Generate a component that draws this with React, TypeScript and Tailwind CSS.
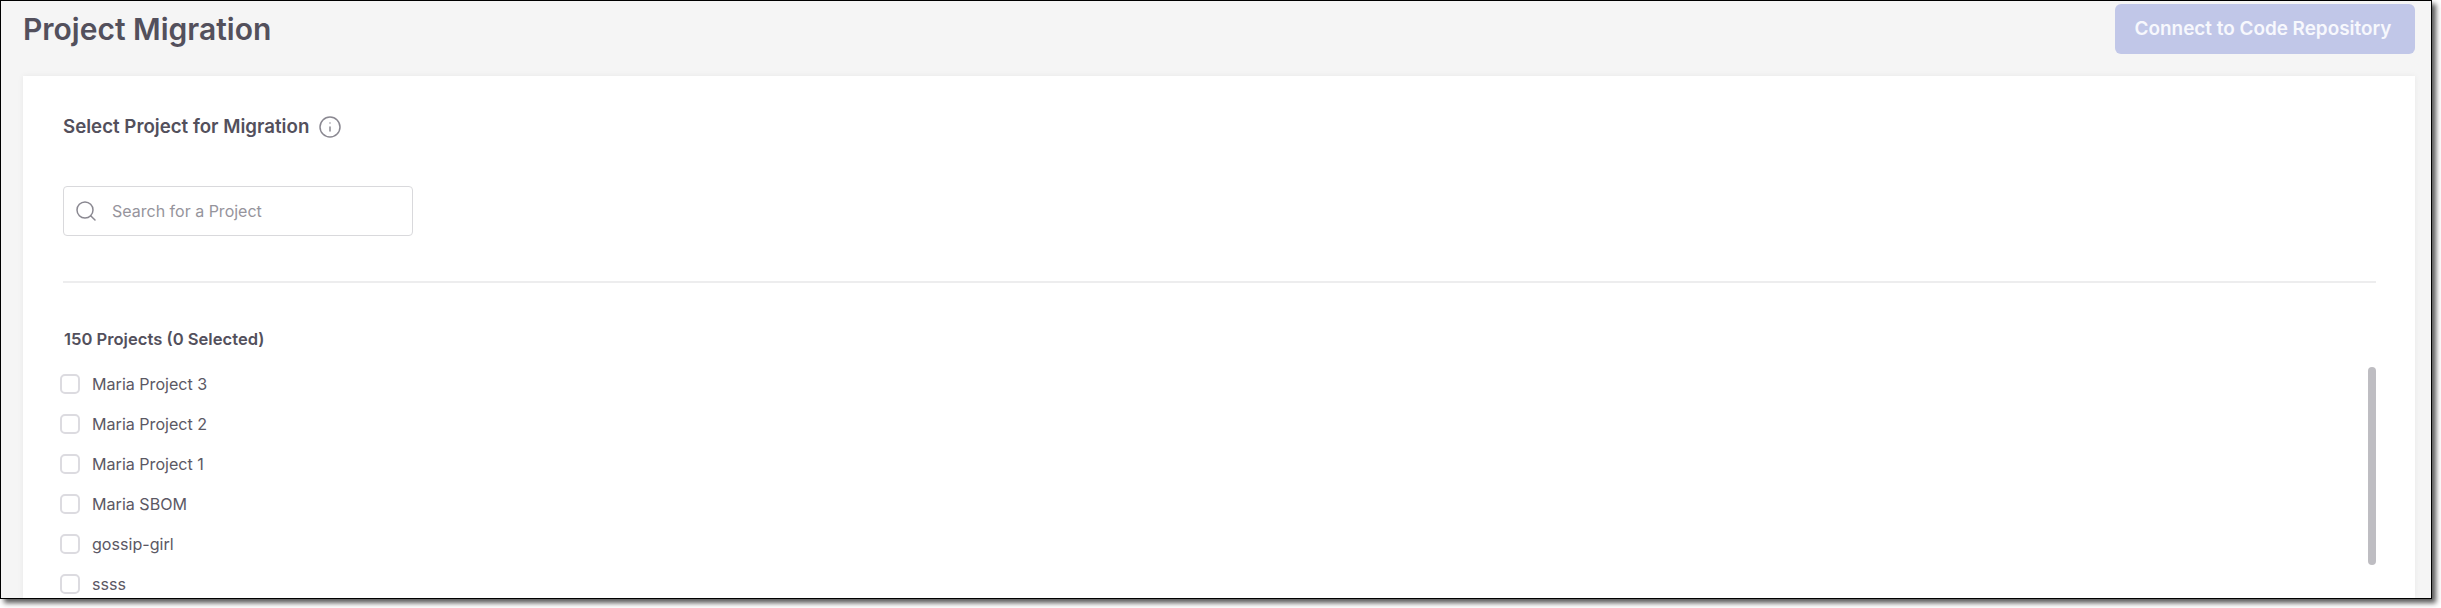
import React from 'react';
import { Info, Search } from 'lucide-react';

const projects = ['Maria Project 3', 'Maria Project 2', 'Maria Project 1', 'Maria SBOM', 'gossip-girl', 'ssss'];

const App: React.FC = () => {
  return (
    <div className="h-[608px] w-[2441px] overflow-hidden bg-white font-['Inter',sans-serif]">
      <div className="flex h-[599px] w-[2432px] flex-col overflow-hidden border border-black bg-[#f5f5f5] shadow-[4px_4px_5px_rgba(0,0,0,0.65)]">
        {/* Header */}
        <div className="flex h-[75px] shrink-0 items-start justify-between pl-[22px] pr-4 pt-[3px]">
          <h1 className="mt-[1px] text-[30px] font-semibold leading-[48px] text-[#53505c]">Project Migration</h1>
          <button className="h-[50px] w-[300px] rounded-md bg-[#c1c7e8] pr-1 text-[18.9px] font-semibold text-[#f7f8fd]">
            Connect to Code Repository
          </button>
        </div>

        {/* Card */}
        <div className="relative ml-[22px] mr-4 flex-1 overflow-hidden bg-white pl-10 pr-[39px] shadow-[0_0_6px_rgba(0,0,0,0.06)]">
          <div className="mt-[36px] flex h-[30px] items-center">
            <h2 className="pt-[1px] text-[18.7px] font-semibold text-[#53505c]">Select Project for Migration</h2>
            <Info size={24} strokeWidth={1.5} className="ml-[9px] text-[#8a8891]" />
          </div>

          <div className="mt-[44px] flex h-[50px] w-[350px] items-center rounded-[4px] border border-[#d9d9dc] bg-white pl-[10px]">
            <Search size={24} strokeWidth={1.5} className="text-[#8a8891]" />
            <span className="ml-[14px] text-[16px] text-[#96949c]">Search for a Project</span>
          </div>

          <div className="mt-[45px] h-[2px] bg-[#ededee]" />

          <div className="ml-[1px] mt-[44px] text-[16.6px] font-semibold leading-6 text-[#53505c]">150 Projects (0 Selected)</div>

          <ul className="-ml-[3px] mt-[13px]">
            {projects.map(p => (
              <li key={p} className="flex h-10 items-center gap-3">
                <span className="h-5 w-5 rounded-[5px] border-2 border-[#dcdbe0] bg-white" />
                <span className="text-[16.1px] text-[#5b5864]">{p}</span>
              </li>
            ))}
          </ul>

          {/* Scrollbar thumb */}
          <div className="absolute right-[39px] top-[291px] h-[198px] w-2 rounded-full bg-[#bebdc2]" />
        </div>
      </div>
    </div>
  );
};

export default App;
